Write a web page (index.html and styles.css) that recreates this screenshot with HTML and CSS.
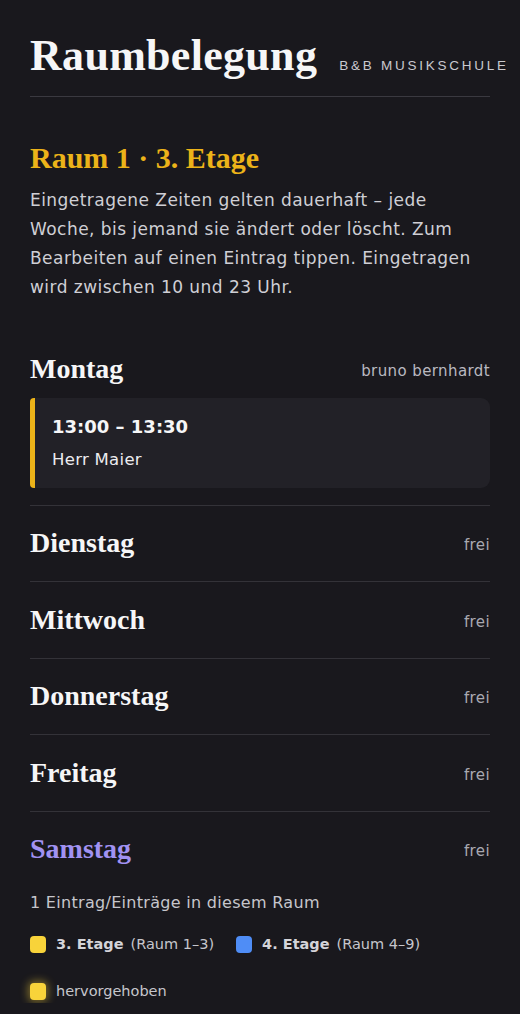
FILE: index.html
```html
<!DOCTYPE html>
<html lang="de">
<head>
<meta charset="utf-8">
<title>Raumbelegung</title>
<link rel="stylesheet" href="styles.css">
</head>
<body>
<main class="page">
  <header class="top">
    <h1 class="title">Raumbelegung</h1>
    <span class="brand">B&amp;B MUSIKSCHULE</span>
  </header>

  <section class="intro">
    <h2 class="room">Raum 1 · 3. Etage</h2>
    <p class="desc">Eingetragene Zeiten gelten dauerhaft – jede Woche, bis jemand sie ändert oder löscht. Zum Bearbeiten auf einen Eintrag tippen. Eingetragen wird zwischen 10 und 23 Uhr.</p>
  </section>

  <section class="days">
    <div class="day">
      <div class="day-head">
        <h3 class="day-name">Montag</h3>
        <span class="day-meta meta-user">bruno bernhardt</span>
      </div>
      <div class="entry">
        <div class="entry-time">13:00 – 13:30</div>
        <div class="entry-name">Herr Maier</div>
      </div>
    </div>
    <div class="day">
      <div class="day-head">
        <h3 class="day-name">Dienstag</h3>
        <span class="day-meta">frei</span>
      </div>
    </div>
    <div class="day">
      <div class="day-head">
        <h3 class="day-name">Mittwoch</h3>
        <span class="day-meta">frei</span>
      </div>
    </div>
    <div class="day">
      <div class="day-head">
        <h3 class="day-name">Donnerstag</h3>
        <span class="day-meta">frei</span>
      </div>
    </div>
    <div class="day">
      <div class="day-head">
        <h3 class="day-name">Freitag</h3>
        <span class="day-meta">frei</span>
      </div>
    </div>
    <div class="day day-last">
      <div class="day-head">
        <h3 class="day-name today">Samstag</h3>
        <span class="day-meta">frei</span>
      </div>
    </div>
  </section>

  <p class="count">1 Eintrag/Einträge in diesem Raum</p>

  <div class="legend">
    <div class="legend-item"><span class="swatch sw-yellow"></span><b>3. Etage</b><span class="muted">(Raum 1–3)</span></div>
    <div class="legend-item"><span class="swatch sw-blue"></span><b>4. Etage</b><span class="muted">(Raum 4–9)</span></div>
    <div class="legend-item"><span class="swatch sw-yellow sw-glow"></span><span class="muted">hervorgehoben</span></div>
  </div>
</main>
</body>
</html>
```

FILE: styles.css
```css
* { box-sizing: border-box; }

html, body {
  margin: 0;
  padding: 0;
  background: #19181d;
}

body {
  font-family: "DejaVu Sans", "Liberation Sans", sans-serif;
  color: #f4f4f6;
}

.page {
  padding: 28px 30px 0 30px;
}

.top {
  display: flex;
  align-items: baseline;
  gap: 22px;
  padding-bottom: 12px;
  border-bottom: 1px solid #3a3940;
}

.title {
  margin: 0;
  font-family: "Liberation Serif", serif;
  font-weight: 700;
  font-size: 44px;
  line-height: 56px;
  color: #f6f6f7;
  letter-spacing: 0.3px;
  white-space: nowrap;
}

.brand {
  font-family: "Liberation Sans", sans-serif;
  font-size: 13.5px;
  letter-spacing: 2.75px;
  color: #c9c9cf;
  white-space: nowrap;
}

.intro {
  padding-top: 44px;
}

.room {
  margin: 0;
  font-family: "Liberation Serif", serif;
  font-weight: 700;
  font-size: 30px;
  line-height: 34px;
  color: #ecb319;
}

.desc {
  margin: 11px 0 0 0;
  font-size: 17px;
  letter-spacing: 0.45px;
  line-height: 29px;
  color: #cfcfd5;
}

.days {
  margin-top: 29px;
}

.day {
  padding: 17px 0;
  border-bottom: 1px solid #333238;
}

.day-last {
  border-bottom: none;
  padding-bottom: 0;
}

.day-head {
  display: flex;
  justify-content: space-between;
  align-items: center;
  height: 41.5px;
}

.day-name {
  margin: 0;
  font-family: "Liberation Serif", serif;
  font-weight: 700;
  font-size: 28px;
  color: #f6f6f7;
}

.today {
  color: #a192f2;
}

.day-meta {
  font-size: 15px;
  letter-spacing: 0.4px;
  color: #a9a9b1;
  padding-top: 4px;
}

.meta-user {
  color: #b9b9c0;
}

.entry {
  margin-top: 8px;
  background: #222127;
  border-left: 5px solid #ecb319;
  border-radius: 4px 9px 9px 4px;
  padding: 16px 18px 16px 17px;
}

.entry-time {
  font-weight: 700;
  font-size: 18px;
  line-height: 26px;
  color: #f6f6f7;
}

.entry-name {
  margin-top: 8px;
  font-size: 16.5px;
  letter-spacing: 0.3px;
  line-height: 24px;
  color: #ececef;
}

.count {
  margin: 21px 0 0 0;
  font-size: 16px;
  letter-spacing: 0.3px;
  line-height: 24px;
  color: #c6c6cc;
}

.legend {
  display: flex;
  flex-wrap: wrap;
  column-gap: 22px;
  row-gap: 23px;
  margin-top: 17px;
}

.legend-item {
  display: flex;
  align-items: center;
  height: 24px;
  font-size: 14.5px;
  color: #c6c6cc;
}

.legend-item b {
  font-weight: 700;
  color: #d4d4d9;
  margin-right: 7px;
}

.swatch {
  width: 16px;
  height: 17px;
  border-radius: 4px;
  margin-right: 10px;
}

.sw-yellow { background: #f8d33a; }
.sw-blue { background: #4f8df6; }

.sw-glow {
  box-shadow: 0 0 8px 2px rgba(248, 211, 58, 0.45);
}

.muted { color: #c6c6cc; }
```
